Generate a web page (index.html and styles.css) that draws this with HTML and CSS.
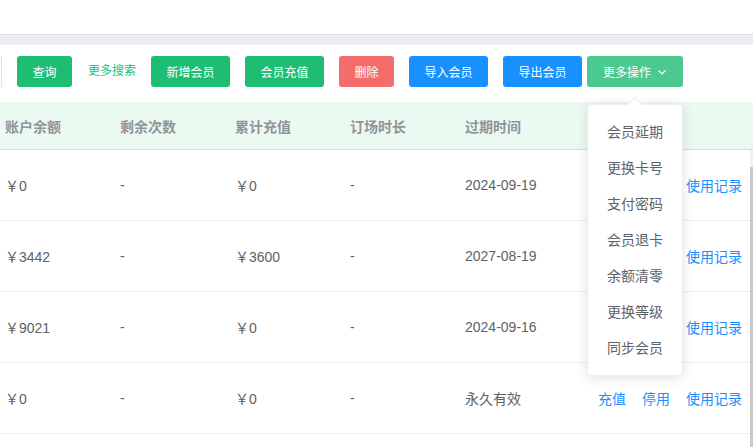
FILE: index.html
```html
<!DOCTYPE html>
<html lang="zh-CN">
<head>
<meta charset="utf-8">
<title>会员管理</title>
<link rel="stylesheet" href="styles.css">
</head>
<body>
<div class="topbar"></div>
<div class="band"></div>
<div class="toolbar">
  <div class="search-input"></div>
  <button class="btn btn-green w55">查询</button>
  <a class="more-search">更多搜索</a>
  <button class="btn btn-green w79">新增会员</button>
  <button class="btn btn-green w79">会员充值</button>
  <button class="btn btn-red w55">删除</button>
  <button class="btn btn-blue w79">导入会员</button>
  <button class="btn btn-blue w79">导出会员</button>
  <div class="dropdown">
    <button class="btn btn-green-hover w96">更多操作
      <svg class="chev" width="10" height="10" viewBox="0 0 10 10"><path d="M1.5 3.5 L5 7 L8.5 3.5" fill="none" stroke="#fff" stroke-width="1.2"/></svg>
    </button>
    <div class="menu">
      <div class="menu-arrow"></div>
      <div class="menu-item">会员延期</div>
      <div class="menu-item">更换卡号</div>
      <div class="menu-item">支付密码</div>
      <div class="menu-item">会员退卡</div>
      <div class="menu-item">余额清零</div>
      <div class="menu-item">更换等级</div>
      <div class="menu-item">同步会员</div>
    </div>
  </div>
</div>

<div class="table">
  <div class="thead">
    <div class="cell">账户余额</div>
    <div class="cell">剩余次数</div>
    <div class="cell">累计充值</div>
    <div class="cell">订场时长</div>
    <div class="cell">过期时间</div>
    <div class="cell action"></div>
  </div>
  <div class="tbody-wrap">
    <div class="tbody">
      <div class="row">
        <div class="cell">￥0</div>
        <div class="cell">-</div>
        <div class="cell">￥0</div>
        <div class="cell">-</div>
        <div class="cell">2024-09-19</div>
        <div class="cell action"><a class="covered">充值</a><a class="covered">停用</a><a>使用记录</a></div>
      </div>
      <div class="row">
        <div class="cell">￥3442</div>
        <div class="cell">-</div>
        <div class="cell">￥3600</div>
        <div class="cell">-</div>
        <div class="cell">2027-08-19</div>
        <div class="cell action"><a class="covered">充值</a><a class="covered">停用</a><a>使用记录</a></div>
      </div>
      <div class="row">
        <div class="cell">￥9021</div>
        <div class="cell">-</div>
        <div class="cell">￥0</div>
        <div class="cell">-</div>
        <div class="cell">2024-09-16</div>
        <div class="cell action"><a class="covered">充值</a><a class="covered">停用</a><a>使用记录</a></div>
      </div>
      <div class="row">
        <div class="cell">￥0</div>
        <div class="cell">-</div>
        <div class="cell">￥0</div>
        <div class="cell">-</div>
        <div class="cell">永久有效</div>
        <div class="cell action"><a>充值</a><a>停用</a><a>使用记录</a></div>
      </div>
      <div class="row"></div>
    </div>
    <div class="scrollbar"><div class="thumb"></div></div>
  </div>
</div>
</body>
</html>
```
FILE: styles.css
```css
* { box-sizing: border-box; }
html, body {
  margin: 0;
  padding: 0;
  width: 753px;
  height: 447px;
  overflow: hidden;
  background: #fff;
  font-family: "Liberation Sans", "Noto Sans CJK SC", sans-serif;
  color: #606266;
}
.topbar { height: 34px; background: #fff; }
.band {
  height: 11px;
  background: #ebedf1;
  border-top: 1px solid #dfe1e6;
}
.toolbar {
  display: flex;
  align-items: flex-start;
  padding-top: 11px;
  height: 57px;
}
.search-input {
  width: 2px;
  height: 31px;
  border: 1px solid #dcdfe6;
  border-left: none;
  border-radius: 0 4px 4px 0;
}
.btn {
  height: 31px;
  border: none;
  border-radius: 3px;
  color: #fff;
  font-size: 12px;
  font-family: "Liberation Sans", "Noto Sans CJK SC", sans-serif;
  padding: 0;
  margin-left: 15px;
  display: flex;
  align-items: center;
  justify-content: center;
}
.w55 { width: 55px; }
.w79 { width: 79px; }
.w96 { width: 96px; }
.btn-green { background: #1fbd73; }
.btn-red { background: #f56c6c; }
.btn-blue { background: #1890ff; }
.btn-green-hover { background: #4cc98f; margin-left: 0; }
.chev { margin-left: 6px; }
.more-search {
  margin-left: 16px;
  width: 48px;
  height: 31px;
  line-height: 31px;
  font-size: 12px;
  color: #1fbd73;
  white-space: nowrap;
}
.dropdown {
  position: relative;
  margin-left: 5px;
}
.menu {
  position: absolute;
  left: 0;
  top: 48px;
  width: 96px;
  height: 272px;
  background: #fff;
  border: 1px solid #ebeef5;
  border-radius: 4px;
  box-shadow: 0 2px 12px rgba(0, 0, 0, 0.12);
  padding-top: 16px;
  z-index: 10;
}
.menu-arrow {
  position: absolute;
  top: -6px;
  left: 42px;
  width: 10px;
  height: 10px;
  background: #fff;
  transform: rotate(45deg);
  border-left: 1px solid #ebeef5;
  border-top: 1px solid #ebeef5;
}
.menu-item {
  height: 36px;
  line-height: 20px;
  font-size: 14px;
  color: #606266;
  text-align: center;
  padding-top: 1px;
}
.thead {
  display: flex;
  height: 48px;
  background: #ebfaf0;
  border-bottom: 1px solid #c3e8d2;
  align-items: center;
}
.thead .cell {
  font-weight: bold;
  color: #909399;
  font-size: 14px;
}
.cell {
  width: 115px;
  padding-left: 5px;
  font-size: 14px;
  white-space: nowrap;
}
.cell.action {
  width: auto;
  flex: 1;
  padding-left: 23px;
  display: flex;
  gap: 16px;
}
.cell.action a { color: #1890ff; }
.cell.action a.covered { visibility: hidden; }
.tbody-wrap { display: flex; }
.tbody { flex: 1; }
.row {
  display: flex;
  align-items: center;
  height: 71px;
  border-bottom: 1px solid #ebeef5;
  color: #606266;
}
.scrollbar {
  width: 3px;
  background: #f1f1f1;
  padding-top: 17px;
}
.thumb {
  height: 300px;
  background: #c8c8c8;
}
```
